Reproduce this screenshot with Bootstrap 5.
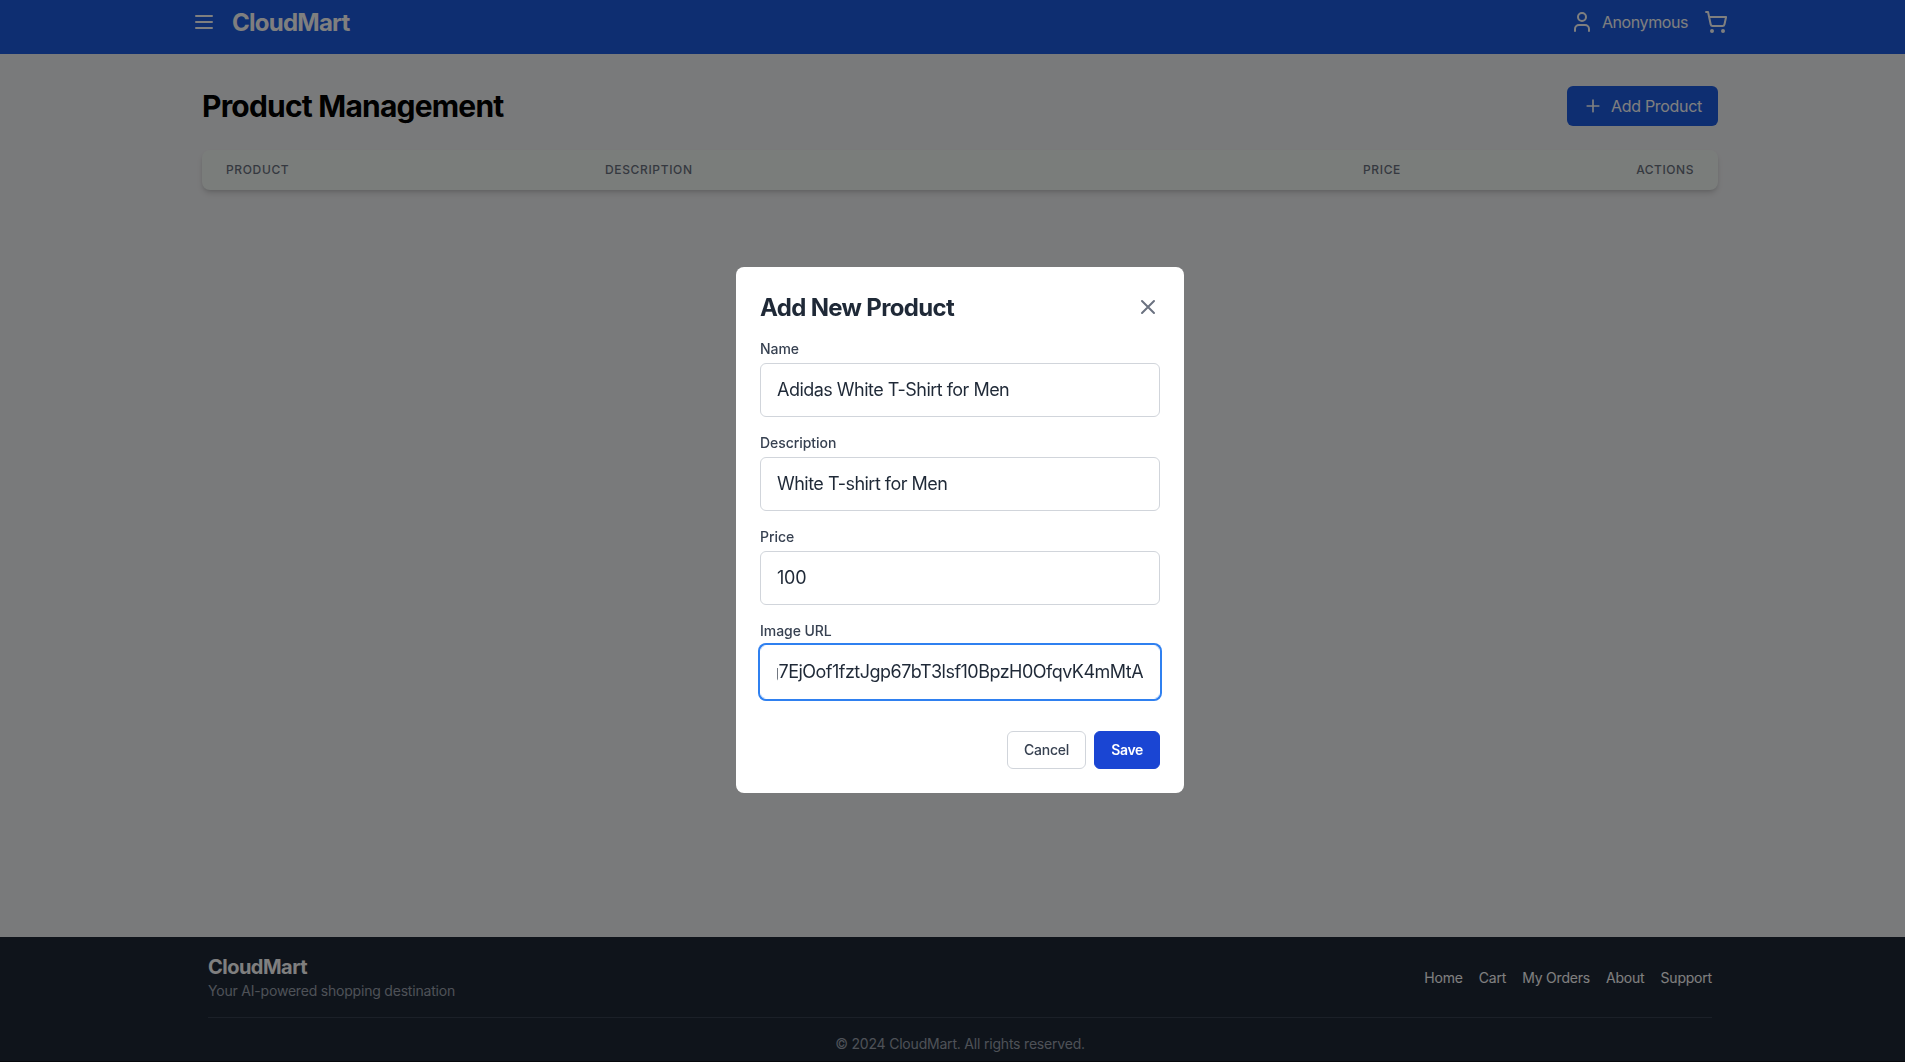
<!DOCTYPE html>
<html lang="en">
<head>
<meta charset="utf-8">
<title>CloudMart - Product Management</title>
<link href="https://cdn.jsdelivr.net/npm/bootstrap@5.3.0/dist/css/bootstrap.min.css" rel="stylesheet">
<style>
body{font-family:Inter,"Liberation Sans",sans-serif;font-size:16px;line-height:24px;color:#000;background:#f3f4f6;overflow:hidden;height:1062px}
.shell{width:1920px;height:1062px;background:#f3f4f6}
svg{fill:none;stroke:currentColor;stroke-width:2;stroke-linecap:round;stroke-linejoin:round;flex:none;display:block}
.topbar{height:54px;background:#1c5ce2;color:#fff;padding:0 192px 10px}
.brand{font-size:24px;font-weight:700;line-height:32px;letter-spacing:-.75px;padding-top:1px}
.user-name{letter-spacing:-.42px}
.content{padding:32px 202px 0}
.page-title{font-size:30px;font-weight:700;line-height:36px;letter-spacing:-.8px}
.btn-add{height:40px;background:#1c5ce2;color:#fff;border-radius:6px;padding:0 16px;font-size:16px;letter-spacing:-.3px}
.grid-head{height:40px;margin-top:24px;background:#f5faf7;border-radius:8px;box-shadow:0 4px 6px -1px rgba(0,0,0,.14),0 2px 4px -2px rgba(0,0,0,.14);font-size:12px;line-height:16px;font-weight:500;letter-spacing:.64px;color:#6b7280}
.grid-head>div{padding:0 24px}
.grid-head>.text-end{letter-spacing:.55px}
.c1{width:379px}.c2{width:758px}.c3{width:189.5px}
.foot{background:#1f2937;height:125px;padding:16px 208px 0;font-size:14px;line-height:20px;letter-spacing:-.2px;color:#fff;border-bottom:1px solid #0c1018}
.foot-brand{font-size:20px;font-weight:700;line-height:28px;letter-spacing:-.52px}
.foot-muted{color:#9ca3af}
.foot-links{padding-top:1px}
.foot-copy{margin-top:16px;border-top:1px solid #374151;padding-top:16px}
.modal,.modal-backdrop{width:1920px;height:1062px}
.modal-dialog{width:448px;max-width:448px;margin:0 auto;height:1062px;min-height:1062px;padding-bottom:2px}
.modal-content{border:0;border-radius:8px;padding:24px;color:#1f2937}
.modal-name{font-size:24px;font-weight:700;line-height:31px;letter-spacing:-.67px;padding-top:1px}
.icon-close{color:#6b7280}
.field-label{font-size:14px;line-height:20px;font-weight:500;color:#374151;margin-bottom:4px;display:block;letter-spacing:-.05px}
.form-control{height:54px;padding:0 16px 2px;border:1px solid #d1d5db;border-radius:6px;font-size:18px;letter-spacing:-.52px;color:#1f2937}
.field-price{letter-spacing:-.2px}
.form-control.is-active{border-color:#fff;box-shadow:0 0 0 2px #2f80f0;letter-spacing:-.52px}
.btn-dlg{height:38px;padding:0 16px;border-radius:6px;font-size:14px;font-weight:500;line-height:20px}
.btn-cancel,.btn-cancel:hover{border:1px solid #d1d5db;color:#374151;background:#fff;letter-spacing:-.23px}
.btn-save,.btn-save:hover{background:#1a45d3;color:#fff;border:1px solid #1a45d3;font-weight:600;letter-spacing:-.32px}
</style>
<script src="https://cdn.jsdelivr.net/npm/bootstrap@5.3.0/dist/js/bootstrap.bundle.min.js"></script>
</head>
<body>
<div class="shell d-flex flex-column">
  <header class="topbar d-flex align-items-center justify-content-between">
    <div class="d-flex align-items-center gap-3">
      <svg width="24" height="24" viewBox="0 0 24 24"><path d="M4 6h16M4 12h16M4 18h16"/></svg>
      <span class="brand">CloudMart</span>
    </div>
    <div class="d-flex align-items-center gap-3">
      <div class="d-flex align-items-center gap-2">
        <svg width="24" height="24" viewBox="0 0 24 24"><path d="M19 21v-2a4 4 0 0 0-4-4H9a4 4 0 0 0-4 4v2"/><circle cx="12" cy="7" r="4"/></svg>
        <span class="user-name">Anonymous</span>
      </div>
      <svg width="24" height="24" viewBox="0 0 24 24"><circle cx="8" cy="21" r="1"/><circle cx="19" cy="21" r="1"/><path d="M2.05 2.05h2l2.66 12.42a2 2 0 0 0 2 1.58h9.78a2 2 0 0 0 1.95-1.57l1.65-7.43H5.12"/></svg>
    </div>
  </header>
  <main class="content flex-grow-1">
    <div class="d-flex align-items-center justify-content-between">
      <h1 class="page-title m-0">Product Management</h1>
      <button class="btn btn-add border-0 d-flex align-items-center gap-2">
        <svg width="20" height="20" viewBox="0 0 24 24"><path d="M5 12h14M12 5v14"/></svg><span>Add Product</span>
      </button>
    </div>
    <div class="grid-head d-flex align-items-center">
      <div class="c1">PRODUCT</div>
      <div class="c2">DESCRIPTION</div>
      <div class="c3">PRICE</div>
      <div class="c3 text-end">ACTIONS</div>
    </div>
  </main>
  <footer class="foot">
    <div class="d-flex align-items-center justify-content-between">
      <div>
        <div class="foot-brand">CloudMart</div>
        <div class="foot-muted">Your AI-powered shopping destination</div>
      </div>
      <nav class="foot-links d-flex gap-3"><span>Home</span><span>Cart</span><span>My Orders</span><span>About</span><span>Support</span></nav>
    </div>
    <div class="foot-copy foot-muted text-center">© 2024 CloudMart. All rights reserved.</div>
  </footer>
</div>
<div class="modal-backdrop show"></div>
<div class="modal d-block show" tabindex="-1">
  <div class="modal-dialog modal-dialog-centered">
    <div class="modal-content">
      <div class="d-flex align-items-center justify-content-between mb-3">
        <h2 class="modal-name m-0">Add New Product</h2>
        <svg class="icon-close" width="24" height="24" viewBox="0 0 24 24"><path d="M18 6 6 18M6 6l12 12"/></svg>
      </div>
      <div class="mb-3"><label class="field-label">Name</label><input class="form-control" value="Adidas White T-Shirt for Men"></div>
      <div class="mb-3"><label class="field-label">Description</label><input class="form-control" value="White T-shirt for Men"></div>
      <div class="mb-3"><label class="field-label">Price</label><input class="form-control field-price" value="100"></div>
      <div><label class="field-label">Image URL</label><input id="image-url" class="form-control is-active" value="g7EjOof1fztJgp67bT3lsf10BpzH0OfqvK4mMtA"></div>
      <div class="d-flex justify-content-end gap-2 mt-4 pt-2">
        <button class="btn btn-dlg btn-cancel">Cancel</button>
        <button class="btn btn-dlg btn-save">Save</button>
      </div>
    </div>
  </div>
</div>
<script>
// Keep the end of the long URL in view
const url = document.getElementById('image-url');
url.scrollLeft = url.scrollWidth;
</script>
</body>
</html>
